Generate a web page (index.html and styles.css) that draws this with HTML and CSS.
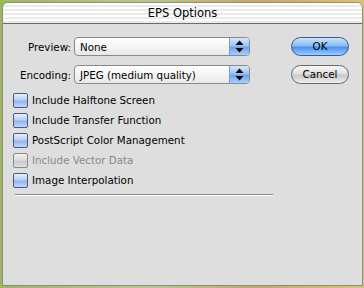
FILE: index.html
```html
<!DOCTYPE html>
<html>
<head>
<meta charset="utf-8">
<link rel="stylesheet" href="styles.css">
</head>
<body>
<div class="window">
  <div class="titlebar">EPS Options</div>
  <div class="content">
    <div class="main">
      <div class="row">
        <span class="label">Preview:</span>
        <div class="popup"><span class="ptext">None</span><span class="arrows"><svg width="9" height="13" viewBox="0 0 9 13"><path d="M4.5 0.5 L8.5 5 L0.5 5 Z M4.5 12.5 L8.5 8 L0.5 8 Z" fill="#000"/></svg></span></div>
      </div>
      <div class="row">
        <span class="label">Encoding:</span>
        <div class="popup"><span class="ptext">JPEG (medium quality)</span><span class="arrows"><svg width="9" height="13" viewBox="0 0 9 13"><path d="M4.5 0.5 L8.5 5 L0.5 5 Z M4.5 12.5 L8.5 8 L0.5 8 Z" fill="#000"/></svg></span></div>
      </div>
      <div class="checks">
        <div class="check"><span class="box"></span>Include Halftone Screen</div>
        <div class="check"><span class="box"></span>Include Transfer Function</div>
        <div class="check"><span class="box"></span>PostScript Color Management</div>
        <div class="check disabled"><span class="box"></span>Include Vector Data</div>
        <div class="check"><span class="box"></span>Image Interpolation</div>
      </div>
      <div class="sep"></div>
    </div>
    <div class="buttons">
      <div class="btn default">OK</div>
      <div class="btn">Cancel</div>
    </div>
  </div>
</div>
</body>
</html>
```
FILE: styles.css
```css
html, body {
  margin: 0;
  padding: 0;
}
body {
  width: 364px;
  height: 288px;
  background: linear-gradient(to right, #9cb85a 0, #b8c890 40%, #c8a860 70%, #e0c070 100%);
  font-family: "DejaVu Sans", Verdana, sans-serif;
  font-size: 10.3px;
  color: #000;
  overflow: hidden;
}
.window {
  margin: 2px 1px 0 2px;
  height: 282px;
  background: #dedede;
  border: 1px solid #8c8c8c;
  border-radius: 6px 6px 0 0;
  display: flex;
  flex-direction: column;
}
.titlebar {
  height: 20px;
  border-radius: 5px 5px 0 0;
  border-bottom: 1px solid #6a6a6a;
  background: repeating-linear-gradient(to bottom, #ffffff 0, #ffffff 2px, #ebebeb 2px, #ebebeb 4px);
  text-align: center;
  font-size: 11.5px;
  line-height: 20px;
}
.content {
  display: flex;
  padding: 13px 13px 0 10px;
}
.main {
  width: 262px;
}
.row {
  display: flex;
  align-items: center;
  height: 19px;
  margin-bottom: 9px;
}
.label {
  width: 58px;
  text-align: right;
  margin-right: 3px;
}
.popup {
  width: 174px;
  height: 17px;
  border: 1px solid #8a8a8a;
  border-radius: 4px;
  background: linear-gradient(to bottom, #ffffff 0, #f4f4f4 50%, #e8e8e8 100%);
  display: flex;
  align-items: center;
  overflow: hidden;
}
.ptext {
  flex: 1;
  padding-left: 5px;
}
.arrows {
  width: 19px;
  height: 17px;
  background: linear-gradient(to bottom, #d8e8fc 0, #9cc4f4 45%, #6aa4ec 55%, #a8d0fc 100%);
  border-left: 1px solid #7a9ac8;
  display: flex;
  align-items: center;
  justify-content: center;
}
.checks {
  margin-top: -3px;
}
.check {
  display: flex;
  align-items: center;
  height: 20px;
}
.box {
  width: 13px;
  height: 13px;
  border: 1px solid #4a5a7a;
  border-radius: 2px;
  background: linear-gradient(to bottom, #e8f0ff 0, #b8cff4 45%, #94b4ec 55%, #c0d8fc 100%);
  margin: 0 4px 0 0;
}
.disabled {
  color: #8a8a8a;
}
.disabled .box {
  border-color: #8a8a8a;
  background: linear-gradient(to bottom, #f4f4f4 0, #d8d8d8 50%, #c8c8c8 55%, #e0e0e0 100%);
}
.sep {
  margin-top: 4px;
  margin-left: 2px;
  width: 258px;
  height: 1px;
  background: #8a8a8a;
  border-bottom: 1px solid #ffffff;
}
.buttons {
  margin-left: auto;
  display: flex;
  flex-direction: column;
  gap: 9px;
}
.btn {
  width: 56px;
  height: 17px;
  border: 1px solid #6a6a6a;
  border-radius: 10px;
  text-align: center;
  line-height: 17px;
  background: linear-gradient(to bottom, #f8f8f8 0, #e0e0e0 45%, #c8c8c8 55%, #f0f0f0 100%);
}
.btn.default {
  border-color: #3a5a9a;
  background: linear-gradient(to bottom, #cce4fc 0, #88bcf4 45%, #4a94ec 55%, #9ccffc 100%);
}
```
